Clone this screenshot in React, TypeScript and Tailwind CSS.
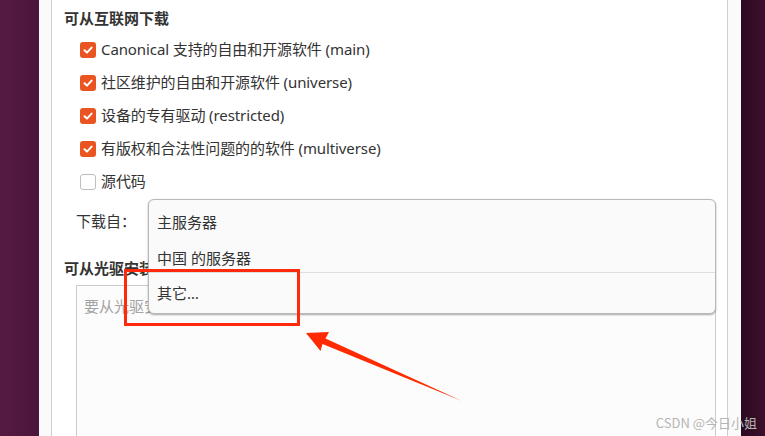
import React from "react";

const font = { fontFamily: '"Noto Sans", "Noto Sans CJK SC", sans-serif' };

function Check({ checked }: { checked: boolean }) {
  if (checked) {
    return (
      <span className="flex h-[16px] w-[16px] items-center justify-center rounded-[3px] bg-[#e95420]">
        <svg width="12" height="12" viewBox="0 0 12 12">
          <path d="M2.5 6.2 L5 8.6 L9.6 3.6" fill="none" stroke="#ffffff" strokeWidth="2" strokeLinecap="round" strokeLinejoin="round" />
        </svg>
      </span>
    );
  }
  return <span className="h-[16px] w-[16px] rounded-[3px] border border-[#bdbdbd] bg-white" />;
}

const rows: { label: string; checked: boolean }[] = [
  { label: "Canonical 支持的自由和开源软件 (main)", checked: true },
  { label: "社区维护的自由和开源软件 (universe)", checked: true },
  { label: "设备的专有驱动 (restricted)", checked: true },
  { label: "有版权和合法性问题的的软件 (multiverse)", checked: true },
  { label: "源代码", checked: false },
];

export default function App() {
  return (
    <div className="relative flex h-[436px] w-[765px] overflow-hidden" style={font}>
      <div className="w-[39px] bg-gradient-to-r from-[#561b44] to-[#4a1539]" />
      <div className="flex w-[702px] bg-[#fafafa]">
        <div className="w-[12px]" />
        <div className="flex w-[677px] flex-col border-x border-[#cfcfcf] bg-white pl-[12px] pt-[7px] text-[15px] text-[#333333]">
          <div className="flex h-[22px] items-center font-bold">可从互联网下载</div>
          <div className="mt-[4px] flex flex-col pl-[16px]">
            {rows.map((r) => (
              <div key={r.label} className="flex h-[33px] items-center gap-[5px] tracking-[-0.1px]">
                <Check checked={r.checked} />
                <span>{r.label}</span>
              </div>
            ))}
          </div>
          <div className="mt-[5px] flex h-[36px] items-center pl-[12px]">下载自：</div>
          <div className="mt-[18px] flex h-[22px] items-center font-bold">可从光驱安装</div>
          <div className="ml-[12px] mt-[6px] w-[640px] flex-1 border border-b-0 border-[#cbcbcb] bg-[#fcfcfc] pl-[7px] pt-[9px] text-[#a3a3a3]">
            要从光驱安装软件
          </div>
        </div>
        <div className="w-[12px]" />
      </div>
      <div className="flex-1 bg-gradient-to-r from-[#2b0a20] to-[#3d0f2d]" />

      {/* dropdown popup */}
      <div className="absolute left-[148px] top-[199px] flex h-[115px] w-[568px] flex-col rounded-[6px] border border-[#b8b8b8] bg-[#fafafa] text-[15px] text-[#333333] shadow-[0_1px_2px_rgba(0,0,0,0.35)]">
        <div className="flex h-[44px] items-center pl-[8px] pt-[1px]">主服务器</div>
        <div className="flex h-[29px] items-center pl-[8px]">中国 的服务器</div>
        <div className="border-t border-[#dedede]" />
        <div className="flex h-[40px] items-center pl-[8px]">其它…</div>
      </div>

      {/* annotation box */}
      <div className="absolute left-[124px] top-[269px] h-[57px] w-[176px] border-[3px] border-[#ff2a0c]" />

      {/* annotation arrow */}
      <svg className="pointer-events-none absolute left-0 top-0" width="765" height="436" viewBox="0 0 765 436">
        <polygon points="306,333 329,332 325.5,338.5 462,401 322.5,344 320.5,351" fill="#ff2a00" />
      </svg>

      {/* watermark */}
      <div className="absolute bottom-[4px] right-[8px] text-[13px] text-[#b5b5b5]" style={{ fontFamily: '"Noto Sans CJK SC", "Noto Sans", sans-serif' }}>
        CSDN @今日小姐
      </div>
    </div>
  );
}
